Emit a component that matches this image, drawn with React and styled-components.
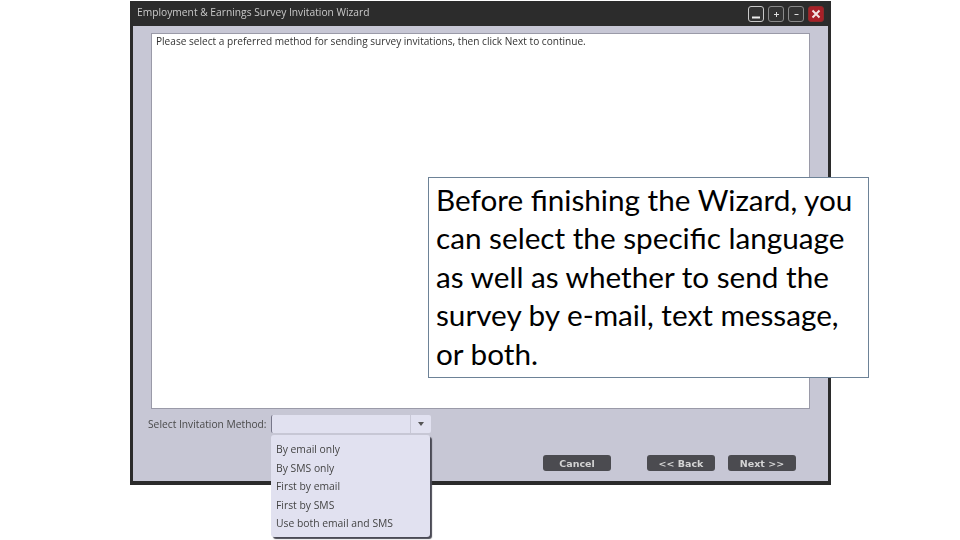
import React from 'react'
import styled, { createGlobalStyle } from 'styled-components'

const Global = createGlobalStyle`
    html, body {
        margin: 0;
        padding: 0;
        background: #fff;
        width: 960px;
        height: 540px;
        overflow: hidden;
    }
`
const Page = styled.div`
    position: relative;
    width: 960px;
    height: 540px;
    padding: 1px 0 0 130px;
    box-sizing: border-box;
    font-family: "Open Sans", "Liberation Sans", sans-serif;
`
const Window = styled.div`
    width: 701px;
    height: 484px;
    box-sizing: border-box;
    display: flex;
    flex-direction: column;
    background: #c7c7d5;
    border: solid #2b2b2b;
    border-width: 1px 3px 4px 3px;
    filter: blur(0.3px);
`
const TitleBar = styled.div`
    height: 24px;
    flex: none;
    display: flex;
    align-items: center;
    justify-content: space-between;
    padding: 0 4px 0 4px;
    background: #2c2c2c;
`
const Title = styled.span`
    color: #c9c9c9;
    font-size: 10.25px;
    position: relative;
    top: -2px;
`
const WinButtons = styled.div`
    display: flex;
    gap: 4px;
`
const WinButton = styled.div`
    width: 16px;
    height: 16px;
    box-sizing: border-box;
    display: flex;
    align-items: center;
    justify-content: center;
    border: 1px solid ${p => (p.$close ? '#8e2a2a' : p.$bright ? '#c9c9c9' : '#8a8a8a')};
    border-radius: 3px;
    background: ${p => (p.$close ? '#a82028' : '#333')};
`
const Content = styled.div`
    flex: 1;
    display: flex;
    flex-direction: column;
    padding: 7px 18px 0 18px;
`
const MessagePanel = styled.div`
    height: 376px;
    flex: none;
    box-sizing: border-box;
    background: #fff;
    border: 1px solid #9a9aa8;
    padding: 0 4px;
    color: #333;
    font-size: 10.1px;
    line-height: 15px;
`
const MethodRow = styled.div`
    display: flex;
    align-items: center;
    height: 18px;
    margin: 6px 0 0 -3px;
`
const MethodLabel = styled.span`
    width: 123px;
    flex: none;
    font-size: 10.25px;
    color: #4a4a4a;
    white-space: nowrap;
`
const Select = styled.div`
    width: 160px;
    height: 18px;
    box-sizing: border-box;
    display: flex;
    justify-content: flex-end;
    background: #e1e1f0;
    border-left: 1px solid #77778a;
    border-radius: 2px;
`
const SelectArrow = styled.div`
    width: 20px;
    display: flex;
    align-items: center;
    justify-content: center;
    border-left: 1px solid #c8c8d6;
    &::after {
        content: "";
        border: 3px solid transparent;
        border-top: 4px solid #555;
        border-bottom: 0;
    }
`
const Buttons = styled.div`
    display: flex;
    margin: 22px 0 0 392px;
`
const Button = styled.div`
    width: 68px;
    height: 16px;
    margin-left: ${p => p.$gap}px;
    display: flex;
    align-items: center;
    justify-content: center;
    background: #4b4b50;
    border-radius: 3px;
    color: #d4d4d4;
    font-family: "DejaVu Sans", sans-serif;
    font-size: 9.5px;
    font-weight: bold;
`
const Dropdown = styled.ul`
    position: absolute;
    left: 271px;
    top: 435px;
    width: 159px;
    height: 102px;
    box-sizing: border-box;
    margin: 0;
    padding: 5px 0 0 5px;
    list-style: none;
    background: #e1e1f0;
    border-radius: 3px;
    box-shadow: 2px 2px 1px #4a4a55;
    filter: blur(0.3px);
`
const DropdownItem = styled.li`
    height: 18.6px;
    line-height: 18.6px;
    font-size: 10.35px;
    color: #444;
    white-space: nowrap;
`
const Callout = styled.div`
    position: absolute;
    left: 428px;
    top: 177px;
    width: 441px;
    height: 201px;
    box-sizing: border-box;
    padding: 3px 7px;
    background: #fff;
    border: 1px solid #6d8297;
    color: #000;
    font-family: Lato, "Open Sans", sans-serif;
    font-size: 29.7px;
    line-height: 38.4px;
    white-space: nowrap;
`

const methods = ['By email only', 'By SMS only', 'First by email', 'First by SMS', 'Use both email and SMS']
const calloutLines = [
    'Before finishing the Wizard, you',
    'can select the specific language',
    'as well as whether to send the',
    'survey by e-mail, text message,',
    'or both.',
]

const App = () => {
    return (
        <Page>
            <Global />
            <Window>
                <TitleBar>
                    <Title>Employment &amp; Earnings Survey Invitation Wizard</Title>
                    <WinButtons>
                        <WinButton $bright>
                            <svg width="10" height="10" viewBox="0 0 10 10"><path d="M1 8.5h8" stroke="#eee" strokeWidth="2" /></svg>
                        </WinButton>
                        <WinButton>
                            <svg width="9" height="9" viewBox="0 0 9 9"><path d="M2 4.5h5M4.5 2v5" stroke="#ddd" strokeWidth="1" /></svg>
                        </WinButton>
                        <WinButton>
                            <svg width="9" height="9" viewBox="0 0 9 9"><path d="M2.5 4.5h4" stroke="#ddd" strokeWidth="1" /></svg>
                        </WinButton>
                        <WinButton $close>
                            <svg width="10" height="10" viewBox="0 0 10 10"><path d="M1.5 1.5l7 7M8.5 1.5l-7 7" stroke="#f4e4e4" strokeWidth="2" /></svg>
                        </WinButton>
                    </WinButtons>
                </TitleBar>
                <Content>
                    <MessagePanel>Please select a preferred method for sending survey invitations, then click Next to continue.</MessagePanel>
                    <MethodRow>
                        <MethodLabel>Select Invitation Method:</MethodLabel>
                        <Select><SelectArrow /></Select>
                    </MethodRow>
                    <Buttons>
                        <Button $gap={0}>Cancel</Button>
                        <Button $gap={36}>&lt;&lt; Back</Button>
                        <Button $gap={13}>Next &gt;&gt;</Button>
                    </Buttons>
                </Content>
            </Window>
            <Dropdown>
                {methods.map(m => <DropdownItem key={m}>{m}</DropdownItem>)}
            </Dropdown>
            <Callout>
                {calloutLines.map(l => <div key={l}>{l}</div>)}
            </Callout>
        </Page>
    )
}

export default App
